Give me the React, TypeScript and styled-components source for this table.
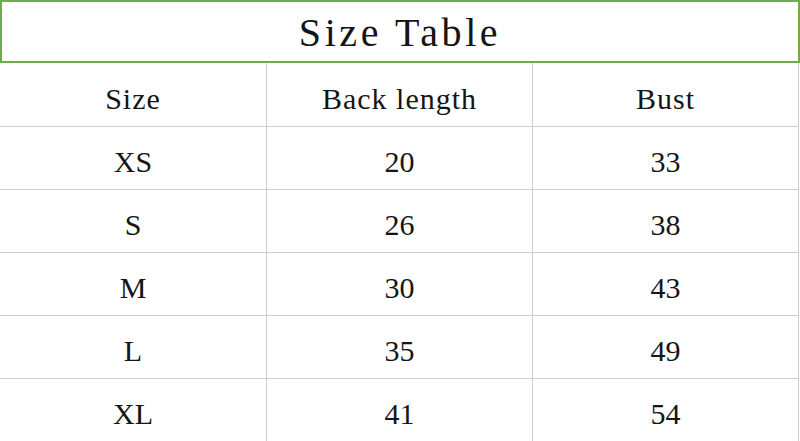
import { Fragment } from 'react';
import styled, { createGlobalStyle } from 'styled-components';

const GlobalStyle = createGlobalStyle`
  html, body {
    margin: 0;
    padding: 0;
    background: #fff;
  }
  body {
    font-family: "Liberation Serif", "Times New Roman", serif;
    color: #151515;
  }
`;

const Page = styled.div`
  width: 800px;
  height: 441px;
  overflow: hidden;
  background: #fff;
`;

const TitleBox = styled.div`
  box-sizing: border-box;
  width: 800px;
  height: 63px;
  border: 2px solid #70ad47;
  display: flex;
  align-items: center;
  justify-content: center;
  padding-top: 3px;
  font-size: 40px;
  letter-spacing: 3.6px;
  line-height: 1;
`;

const Grid = styled.div`
  display: grid;
  grid-template-columns: 267px 266px 266px;
`;

const Cell = styled.div<{ $header?: boolean }>`
  box-sizing: border-box;
  height: ${(p) => (p.$header ? 64 : 63)}px;
  border-right: 1px solid #cdcdcd;
  border-bottom: 1px solid #cdcdcd;
  display: flex;
  align-items: center;
  justify-content: center;
  padding-top: 8px;
  font-size: 30px;
  letter-spacing: ${(p) => (p.$header ? 1 : 0)}px;
  line-height: 1;
`;

const headers = ['Size', 'Back length', 'Bust'];

const rows: [string, number, number][] = [
  ['XS', 20, 33],
  ['S', 26, 38],
  ['M', 30, 43],
  ['L', 35, 49],
  ['XL', 41, 54],
];

export default function App() {
  return (
    <Page>
      <GlobalStyle />
      <TitleBox>Size Table</TitleBox>
      <Grid>
        {headers.map((h) => (
          <Cell key={h} $header>
            {h}
          </Cell>
        ))}
        {rows.map(([size, back, bust]) => (
          <Fragment key={size}>
            <Cell>{size}</Cell>
            <Cell>{back}</Cell>
            <Cell>{bust}</Cell>
          </Fragment>
        ))}
      </Grid>
    </Page>
  );
}
